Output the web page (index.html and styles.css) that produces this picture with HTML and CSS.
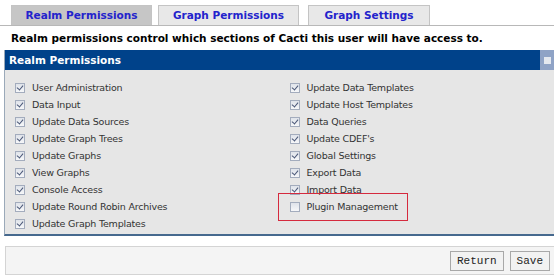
FILE: index.html
```html
<!DOCTYPE html>
<html lang="en">
<head>
  <meta charset="UTF-8" />
  <title>Cacti | Realm Permissions</title>
  <link rel="stylesheet" href="styles.css">
</head>
<body>
  <div class="tabs">
    <div class="tab active">Realm Permissions</div>
    <div class="tab">Graph Permissions</div>
    <div class="tab">Graph Settings</div>
  </div>

  <p class="intro">Realm permissions control which sections of Cacti this user will have access to.</p>

  <div class="panel">
    <div class="panel-head">
      <span>Realm Permissions</span>
      <span class="collapse"><i></i></span>
    </div>
    <div class="panel-body">
      <ul class="realms">
        <li><input type="checkbox" checked> User Administration</li>
        <li><input type="checkbox" checked> Data Input</li>
        <li><input type="checkbox" checked> Update Data Sources</li>
        <li><input type="checkbox" checked> Update Graph Trees</li>
        <li><input type="checkbox" checked> Update Graphs</li>
        <li><input type="checkbox" checked> View Graphs</li>
        <li><input type="checkbox" checked> Console Access</li>
        <li><input type="checkbox" checked> Update Round Robin Archives</li>
        <li><input type="checkbox" checked> Update Graph Templates</li>
      </ul>
      <ul class="realms">
        <li><input type="checkbox" checked> Update Data Templates</li>
        <li><input type="checkbox" checked> Update Host Templates</li>
        <li><input type="checkbox" checked> Data Queries</li>
        <li><input type="checkbox" checked> Update CDEF's</li>
        <li><input type="checkbox" checked> Global Settings</li>
        <li><input type="checkbox" checked> Export Data</li>
        <li><input type="checkbox" checked> Import Data</li>
        <li class="marked"><input type="checkbox"> Plugin Management</li>
      </ul>
    </div>
  </div>

  <div class="actions">
    <button>Return</button>
    <button>Save</button>
  </div>
</body>
</html>
```

FILE: styles.css
```css
body {
  margin: 0;
  background: #fff;
  color: #000;
  font-family: 'DejaVu Sans', Verdana, sans-serif;
}

.tabs {
  display: flex;
  gap: 6px;
  padding: 5px 0 0 11px;
  border-bottom: 1px solid #b8b8b8;
}

.tab {
  box-sizing: border-box;
  width: 141px;
  height: 20px;
  line-height: 19px;
  text-align: center;
  font-size: 10.5px;
  font-weight: bold;
  color: #2323cc;
  background: #e8e8e8;
  border: 1px solid #c4c4c4;
  border-bottom: none;
}

.tab.active {
  background: #c6c6c6;
}

.tab:last-child {
  width: 122px;
  margin-left: 3px;
}

.intro {
  margin: 4px 0 0 11px;
  font-size: 10.5px;
  font-weight: bold;
  height: 20px;
  line-height: 16px;
}

.panel {
  margin-left: 4px;
  border-left: 1px solid #9aa9b9;
  border-bottom: 2px solid #46698e;
  background: #e6e6e6;
}

.panel-head {
  display: flex;
  justify-content: space-between;
  align-items: center;
  height: 20px;
  padding-left: 4px;
  background: #00428a;
  color: white;
  font-size: 10.5px;
  font-weight: bold;
}

.collapse {
  width: 14px;
  height: 20px;
  background: #8fa3c6;
  display: flex;
  align-items: center;
  justify-content: center;
}

.collapse i {
  width: 7px;
  height: 7px;
  background: #e4e8ef;
}

.panel-body {
  display: flex;
  padding: 9px 0 2px 0;
}

.realms {
  list-style: none;
  margin: 0;
  padding: 0 0 0 10px;
  width: 273px;
}

.realms li {
  position: relative;
  display: flex;
  align-items: center;
  gap: 7px;
  height: 17px;
  font-size: 9.5px;
  letter-spacing: -0.2px;
  color: #333;
}

.realms input {
  appearance: none;
  position: relative;
  margin: 0;
  width: 10px;
  height: 10px;
  border: 1px solid #a3acbd;
  background: linear-gradient(#dfe3ea, #f6f7f9);
}

.realms input:checked::after {
  content: "";
  position: absolute;
  left: 2px;
  top: 0;
  width: 3px;
  height: 5px;
  border: solid #4b5878;
  border-width: 0 1.5px 1.5px 0;
  transform: rotate(40deg);
}

.marked::after {
  content: "";
  position: absolute;
  left: -12px;
  top: -5px;
  width: 128px;
  height: 26px;
  border: 1px solid #d52a3e;
}

.actions {
  display: flex;
  justify-content: flex-end;
  gap: 6px;
  margin: 10px 0 0 5px;
  padding: 4px 4px 3px 0;
  background: #f4f4f4;
  border: 1px solid #d4d4d4;
  border-right: none;
}

.actions button {
  font-family: 'Liberation Mono', monospace;
  font-size: 11px;
  padding: 3px 6px;
  background: #f2f2f2;
  border: 1px solid #a8a8a8;
  color: #222;
}
```
